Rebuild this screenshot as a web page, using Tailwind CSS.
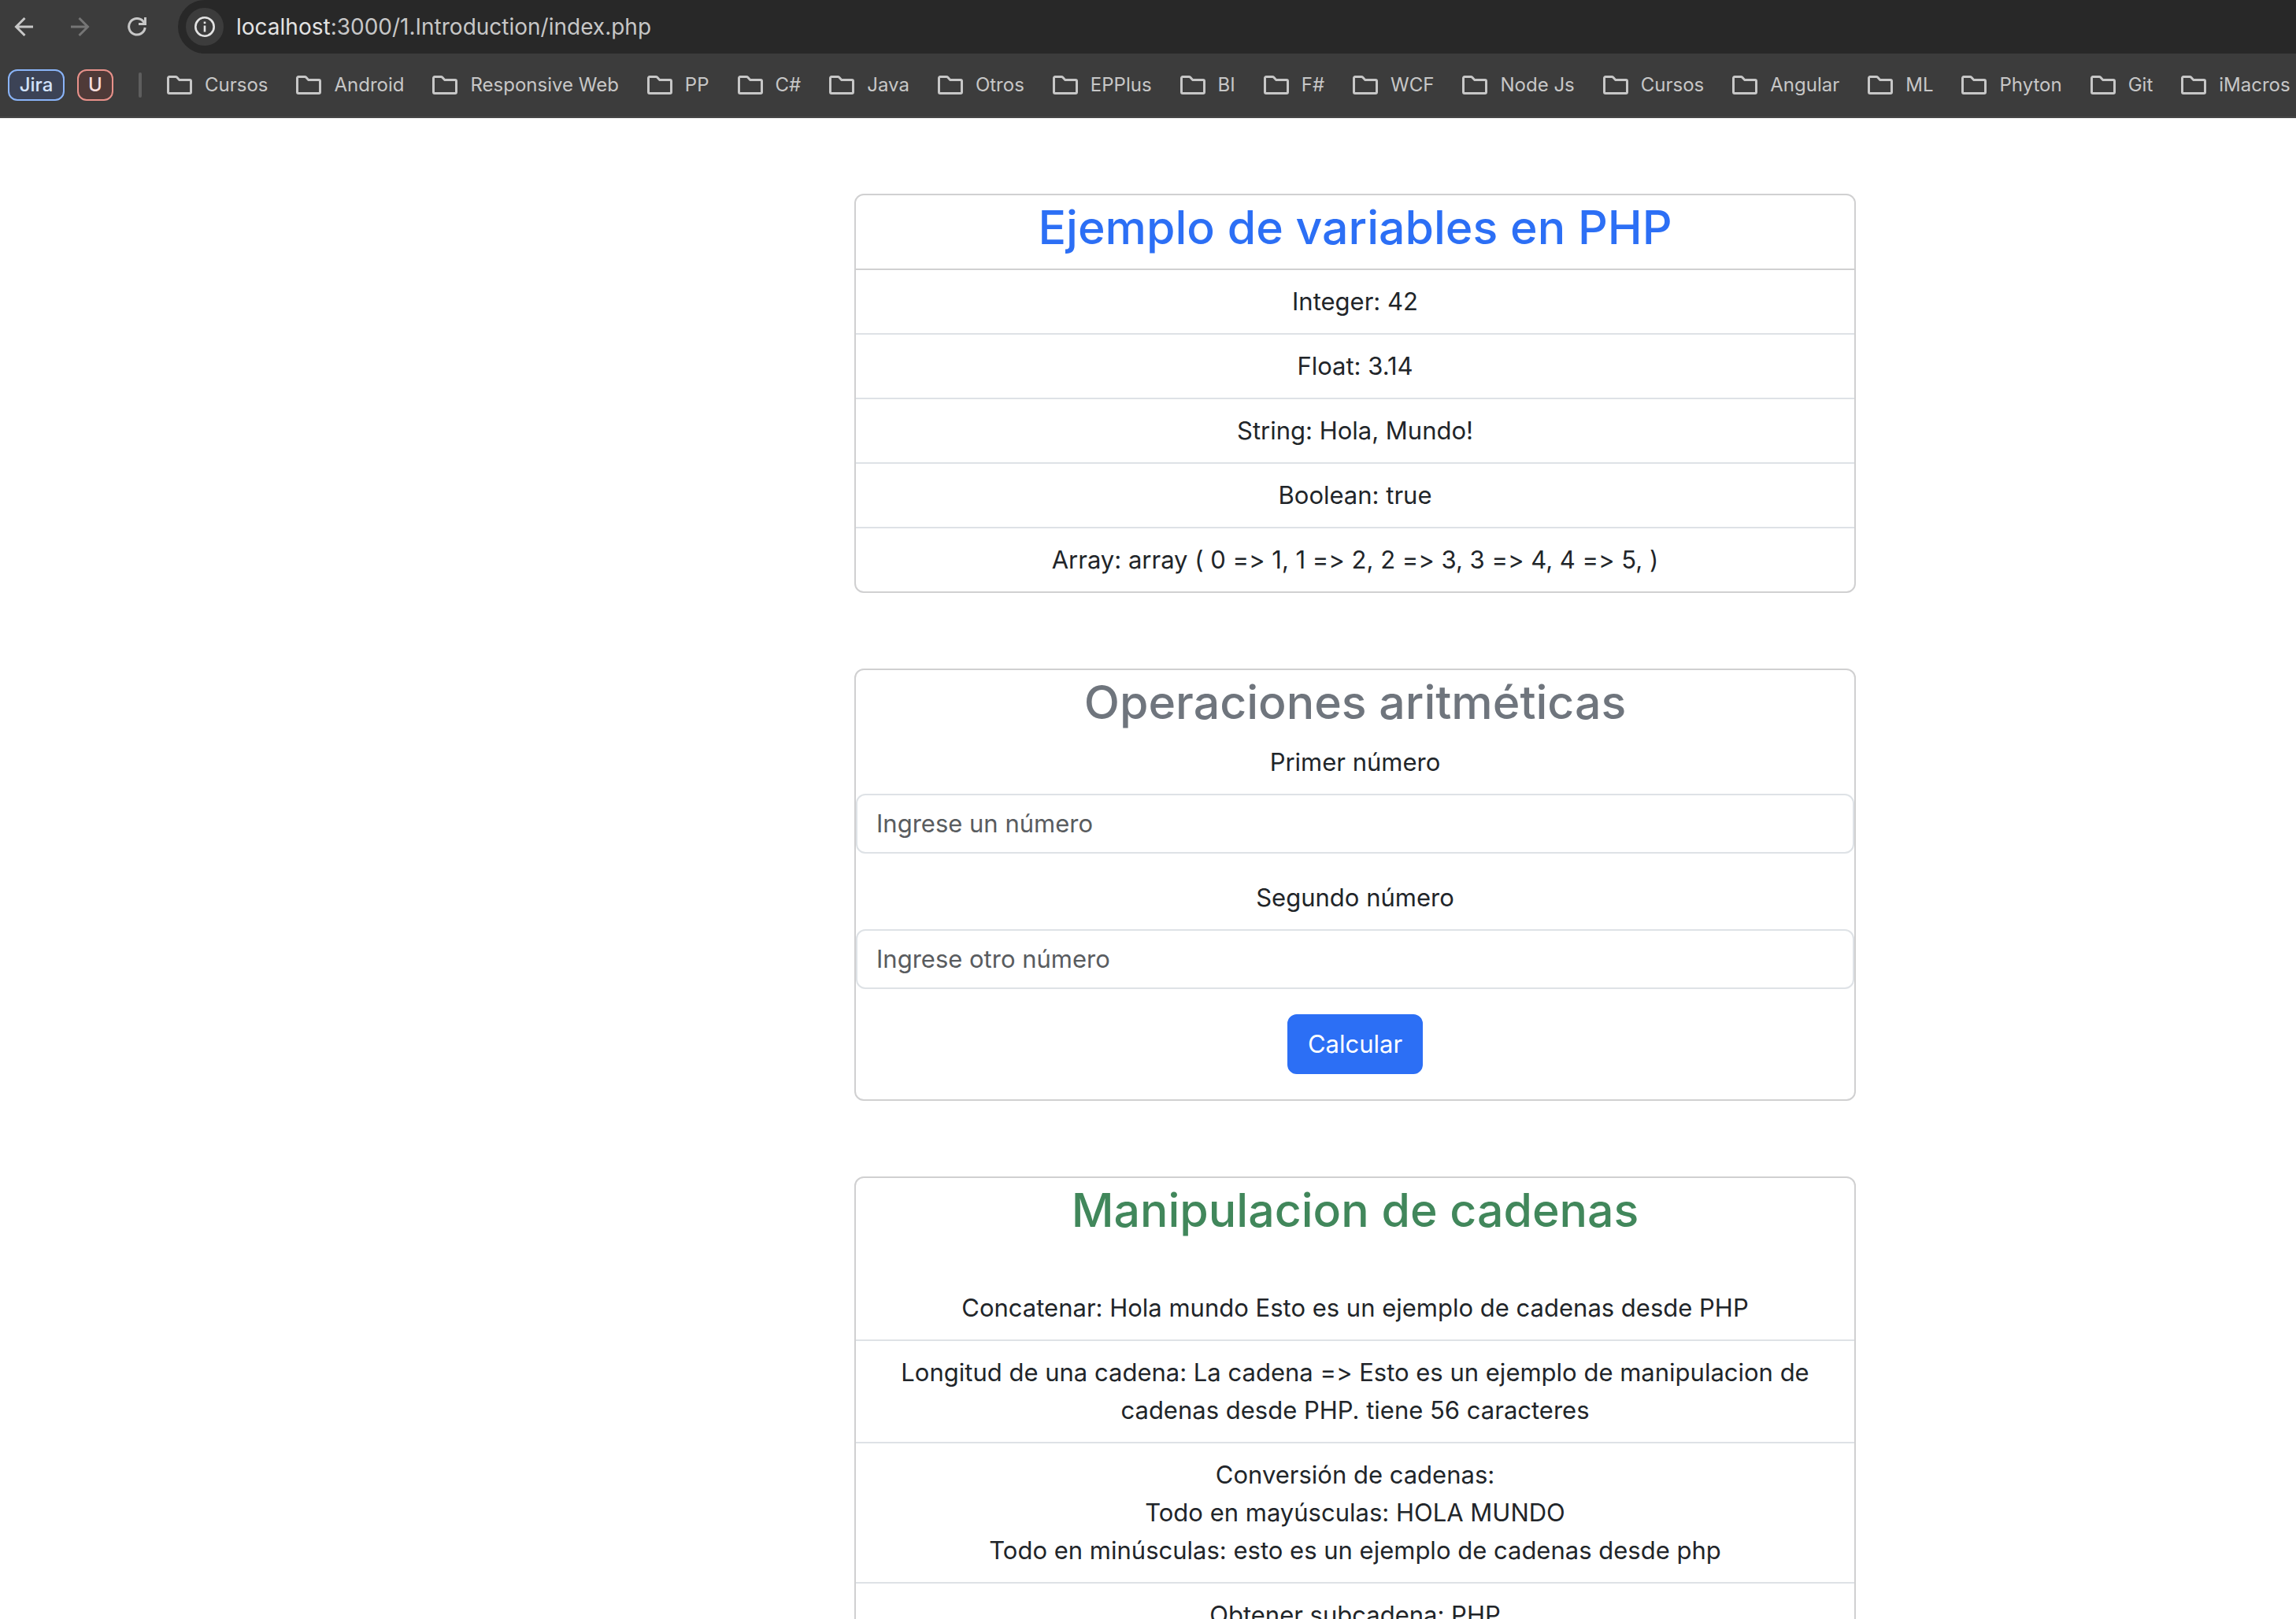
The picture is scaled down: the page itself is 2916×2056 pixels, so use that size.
<!DOCTYPE html>
<html lang="es">
<head>
<meta charset="utf-8">
<title>localhost:3000/1.Introduction/index.php</title>
<script src="https://cdn.jsdelivr.net/npm/@tailwindcss/browser@4"></script>
</head>
<body class="h-screen overflow-hidden bg-white font-['Inter',sans-serif] text-[31px] leading-[48px] text-[#212529] [font-feature-settings:'calt'_0]">
<svg class="hidden" aria-hidden="true">
  <symbol id="folder" viewBox="0 0 32 24">
    <path d="M3 1.5h8.2c.6 0 1 .2 1.4.6l2.9 3.1c.3.3.6.4 1 .4H29a1.5 1.5 0 0 1 1.5 1.500V21a1.500 1.500 0 0 1-1.500 1.500H3A1.500 1.500 0 0 1 1.500 21V3A1.500 1.500 0 0 1 3 1.500z" fill="none" stroke="currentColor" stroke-width="3"/>
  </symbol>
</svg>

<header class="overflow-hidden border-b-2 border-[#474747] bg-[#3c3c3c] text-[#c7c7c7]">
  <div class="flex h-[68px] items-center">
    <nav class="flex items-center gap-12 pl-[18px]" aria-label="Historial">
      <button class="block" aria-label="Atrás">
        <svg class="size-6" viewBox="0 0 24 24" fill="none" stroke="currentColor" stroke-width="3"><path d="M24 12H2.500M13.500 1L2.500 12l11 11"/></svg>
      </button>
      <button class="block text-[#757575]" aria-label="Adelante">
        <svg class="size-6" viewBox="0 0 24 24" fill="none" stroke="currentColor" stroke-width="3"><path d="M0 12h21.500M10.500 1l11 11-11 11"/></svg>
      </button>
      <button class="block" aria-label="Recargar">
        <svg class="size-6" viewBox="0 0 24 24" fill="none" stroke="currentColor" stroke-width="3"><path d="M22.200 13A10.300 10.300 0 1 1 20 5.300L22 8"/><path d="M22.500 0v8.500H14"/></svg>
      </button>
    </nav>
    <div class="ml-10 flex h-full flex-1 items-center gap-4 rounded-l-full bg-[#282828] pl-[10px]">
      <button class="flex size-12 items-center justify-center rounded-full bg-[#3c3c3c] text-[#e3e3e3]" aria-label="Información del sitio">
        <svg class="size-[26px]" viewBox="0 0 26 26" fill="none" stroke="currentColor"><circle cx="13" cy="13" r="11.700" stroke-width="2.600"/><path d="M13 11.500v8" stroke-width="2.600"/><path d="M13 6.500v2.600" stroke-width="2.600"/></svg>
      </button>
      <a href="#" class="text-[28px] leading-9"><span class="text-[#e3e3e3]">localhost</span>:3000/1.Introduction/index.php</a>
    </div>
  </div>
  <nav class="flex h-20 items-center pl-[10px] text-[24px] leading-8 whitespace-nowrap" aria-label="Marcadores">
    <button class="mr-4 h-10 w-[72px] rounded-xl border-2 border-[#8ab4f8] bg-[#3c4356] font-medium text-[#d3e3fd]">Jira</button>
    <button class="h-10 w-[46px] rounded-xl border-2 border-[#e8918a] bg-[#4f3a38] font-medium text-[#f9dedc]">U</button>
    <span class="mx-8 h-8 w-1 shrink-0 rounded-full bg-[#5e5e5e]"></span>
    <ul id="bookmarks" class="flex items-center gap-9"></ul>
  </nav>
</header>

<main class="grid grid-cols-[1085fr_1272fr_559fr] pt-24 text-center">
  <div class="col-start-2 flex flex-col gap-24">
    <section class="rounded-xl border-2 border-[#d0d0d1]">
      <h2 class="border-b-2 border-[#d0d0d1] pt-0.5 pb-3.5 text-[59px] leading-[77px] font-medium text-[#2c6ff5]">Ejemplo de variables en PHP</h2>
      <ul class="divide-y-2 divide-[#dee2e6]">
        <li class="px-8 py-4">Integer: 42</li>
        <li class="px-8 py-4">Float: 3.14</li>
        <li class="px-8 py-4">String: Hola, Mundo!</li>
        <li class="px-8 py-4">Boolean: true</li>
        <li class="px-8 py-4">Array: array ( 0 =&gt; 1, 1 =&gt; 2, 2 =&gt; 3, 3 =&gt; 4, 4 =&gt; 5, )</li>
      </ul>
    </section>

    <section class="rounded-xl border-2 border-[#d0d0d1]">
      <h2 class="pt-0.5 pb-3.5 text-[59px] leading-[77px] font-medium text-[#6f757d]">Operaciones aritméticas</h2>
      <form class="flex flex-col items-center pb-8" onsubmit="return false">
        <label for="n1" class="mb-4">Primer número</label>
        <input id="n1" type="text" placeholder="Ingrese un número" class="mb-8 w-full rounded-xl border-2 border-[#dee2e6] px-6 py-3 placeholder:text-[#595c5f]">
        <label for="n2" class="mb-4">Segundo número</label>
        <input id="n2" type="text" placeholder="Ingrese otro número" class="mb-8 w-full rounded-xl border-2 border-[#dee2e6] px-6 py-3 placeholder:text-[#595c5f]">
        <button class="rounded-xl border-2 border-[#2c6ff5] bg-[#2c6ff5] px-6 py-3 text-white">Calcular</button>
      </form>
    </section>

    <section class="rounded-xl border-2 border-[#d0d0d1]">
      <h2 class="mb-8 pt-0.5 pb-3.5 text-[59px] leading-[77px] font-medium text-[#41875b]">Manipulacion de cadenas</h2>
      <ul class="divide-y-2 divide-[#dee2e6]">
        <li class="px-8 py-4">Concatenar: Hola mundo Esto es un ejemplo de cadenas desde PHP</li>
        <li class="px-8 py-4">Longitud de una cadena: La cadena =&gt; Esto es un ejemplo de manipulacion de cadenas desde PHP. tiene 56 caracteres</li>
        <li class="px-8 py-4">Conversión de cadenas:<br>Todo en mayúsculas: HOLA MUNDO<br>Todo en minúsculas: esto es un ejemplo de cadenas desde php</li>
        <li class="px-8 py-4">Obtener subcadena: PHP</li>
      </ul>
    </section>
  </div>
</main>

<script>
  const folders = ['Cursos', 'Android', 'Responsive Web', 'PP', 'C#', 'Java', 'Otros', 'EPPlus', 'BI', 'F#', 'WCF', 'Node Js', 'Cursos', 'Angular', 'ML', 'Phyton', 'Git', 'iMacros'];
  document.getElementById('bookmarks').innerHTML = folders.map(name =>
    `<li><a href="#" class="flex items-center gap-4"><svg class="h-6 w-8 shrink-0"><use href="#folder"/></svg>${name}</a></li>`).join('');
</script>
</body>
</html>
